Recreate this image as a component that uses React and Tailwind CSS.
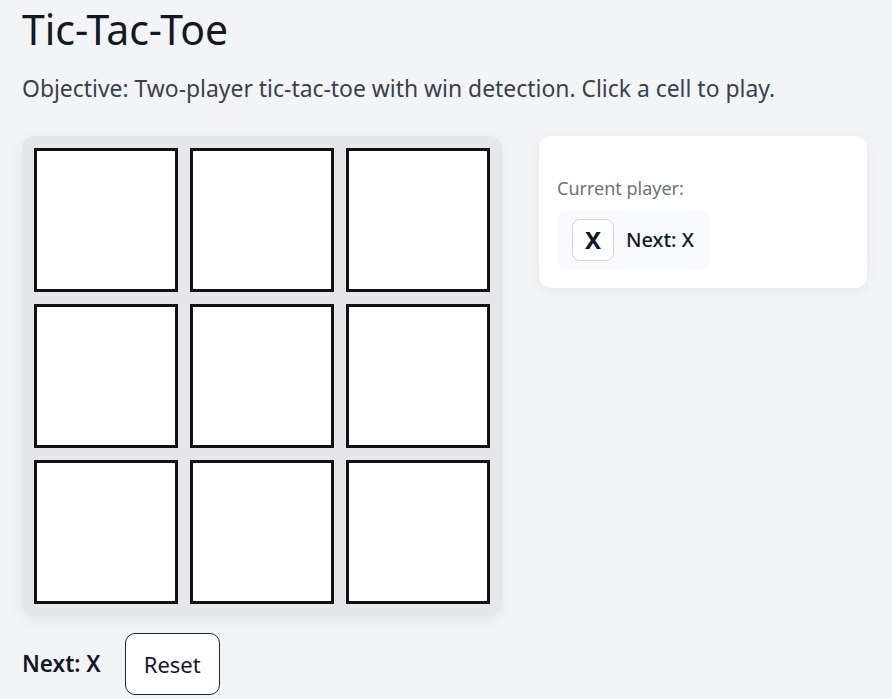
import React, { useState } from "react";

const lines = [
  [0, 1, 2], [3, 4, 5], [6, 7, 8],
  [0, 3, 6], [1, 4, 7], [2, 5, 8],
  [0, 4, 8], [2, 4, 6],
];

const findWinner = (cells) => {
  for (const [a, b, c] of lines) {
    if (cells[a] && cells[a] === cells[b] && cells[a] === cells[c]) return cells[a];
  }
  return null;
};

export default function App() {
  const [cells, setCells] = useState(Array(9).fill(null));
  const [player, setPlayer] = useState("X");
  const winner = findWinner(cells);
  const full = cells.every(Boolean);
  const status = winner ? `Winner: ${winner}` : full ? "Draw" : `Next: ${player}`;

  const play = (i) => {
    if (cells[i] || winner) return;
    const next = cells.slice();
    next[i] = player;
    setCells(next);
    setPlayer(player === "X" ? "O" : "X");
  };

  const reset = () => {
    setCells(Array(9).fill(null));
    setPlayer("X");
  };

  return (
    <div
      className="min-h-screen bg-[#f3f4f6] px-[22px] text-[#111827]"
      style={{ fontFamily: '"Noto Sans", "Open Sans", sans-serif' }}
    >
      <h1 className="text-[41px] leading-[58px] font-normal">Tic-Tac-Toe</h1>
      <p className="mt-[17px] text-[22.9px] leading-[28px] text-[#374151]">
        Objective: Two-player tic-tac-toe with win detection. Click a cell to play.
      </p>

      <div className="mt-[33px] flex items-start gap-[37px]">
        <div className="grid grid-cols-3 gap-[12px] rounded-[12px] bg-[#e5e7eb] p-[12px] shadow-[0_4px_16px_rgba(0,0,0,0.06)]">
          {cells.map((v, i) => (
            <button
              key={i}
              onClick={() => play(i)}
              className="flex h-[144px] w-[144px] items-center justify-center border-[3px] border-[#111111] bg-white text-[64px] font-bold"
            >
              {v}
            </button>
          ))}
        </div>

        <div className="w-[328px] rounded-[12px] bg-white px-[18px] pb-[18px] pt-[39px] shadow-[0_2px_12px_rgba(0,0,0,0.06)]">
          <div className="text-[18px] leading-[26px] text-[#6b7280]">Current player:</div>
          <div className="mt-[9px] inline-flex items-center gap-[12px] rounded-[10px] bg-[#f8fafc] px-[15px] py-[9px]">
            <span className="flex h-[42px] w-[42px] items-center justify-center rounded-[8px] border border-[#d1d5db] bg-white text-[24px] font-bold">
              {player}
            </span>
            <span className="text-[20px] font-medium">{status}</span>
          </div>
        </div>
      </div>

      <div className="mt-[17px] flex items-center gap-[24px] pb-[6px]">
        <span className="text-[22.5px] font-semibold">{status}</span>
        <button
          onClick={reset}
          className="h-[62px] w-[95px] rounded-[10px] border border-[#1f2937] bg-white text-[22px]"
        >
          Reset
        </button>
      </div>
    </div>
  );
}
